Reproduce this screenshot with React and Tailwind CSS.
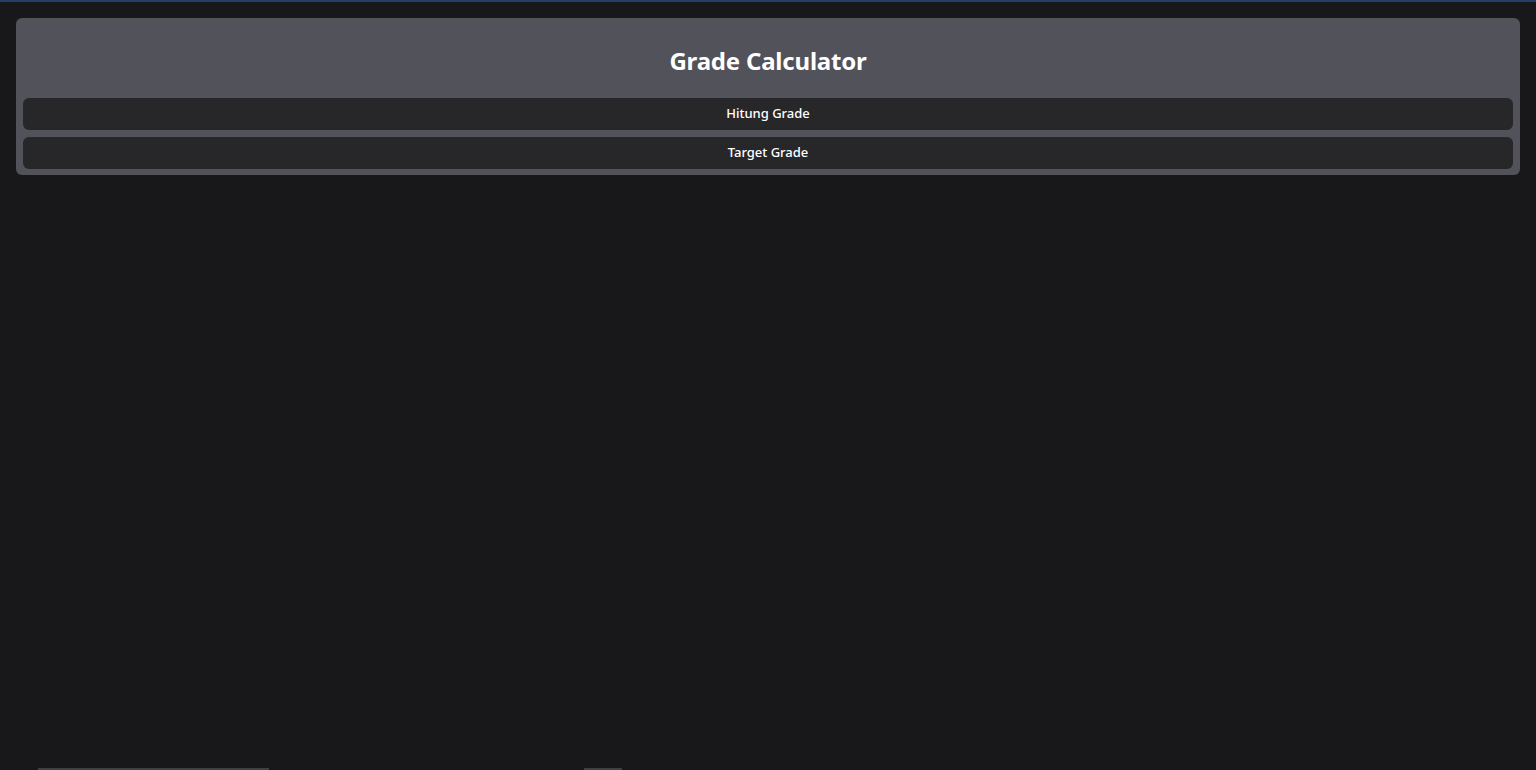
export default function App() {
  return (
    <div className="min-h-[770px] bg-[#18181b] flex flex-col" style={{ fontFamily: '"Noto Sans", "Open Sans", sans-serif' }}>
      <div className="h-[2px] bg-[#22406a]" />
      <div className="p-4">
        <div className="bg-[#52525b] rounded-md px-[7px] pb-[6px]">
          <h1 className="h-[80px] pt-[6px] flex items-center justify-center text-white text-[24px] font-bold tracking-[-0.2px]">
            Grade Calculator
          </h1>
          <div className="flex flex-col gap-[7px]">
            <button className="h-[32px] bg-[#27272a] rounded-md text-white text-[13px] font-medium">
              Hitung Grade
            </button>
            <button className="h-[32px] bg-[#27272a] rounded-md text-white text-[13px] font-medium">
              Target Grade
            </button>
          </div>
        </div>
      </div>
      <div className="flex-1" />
      <div className="flex h-[2px] mb-0">
        <div className="ml-[38px] w-[231px] bg-[#3f3f46]" />
        <div className="ml-[315px] w-[38px] bg-[#3f3f46]" />
      </div>
    </div>
  );
}
